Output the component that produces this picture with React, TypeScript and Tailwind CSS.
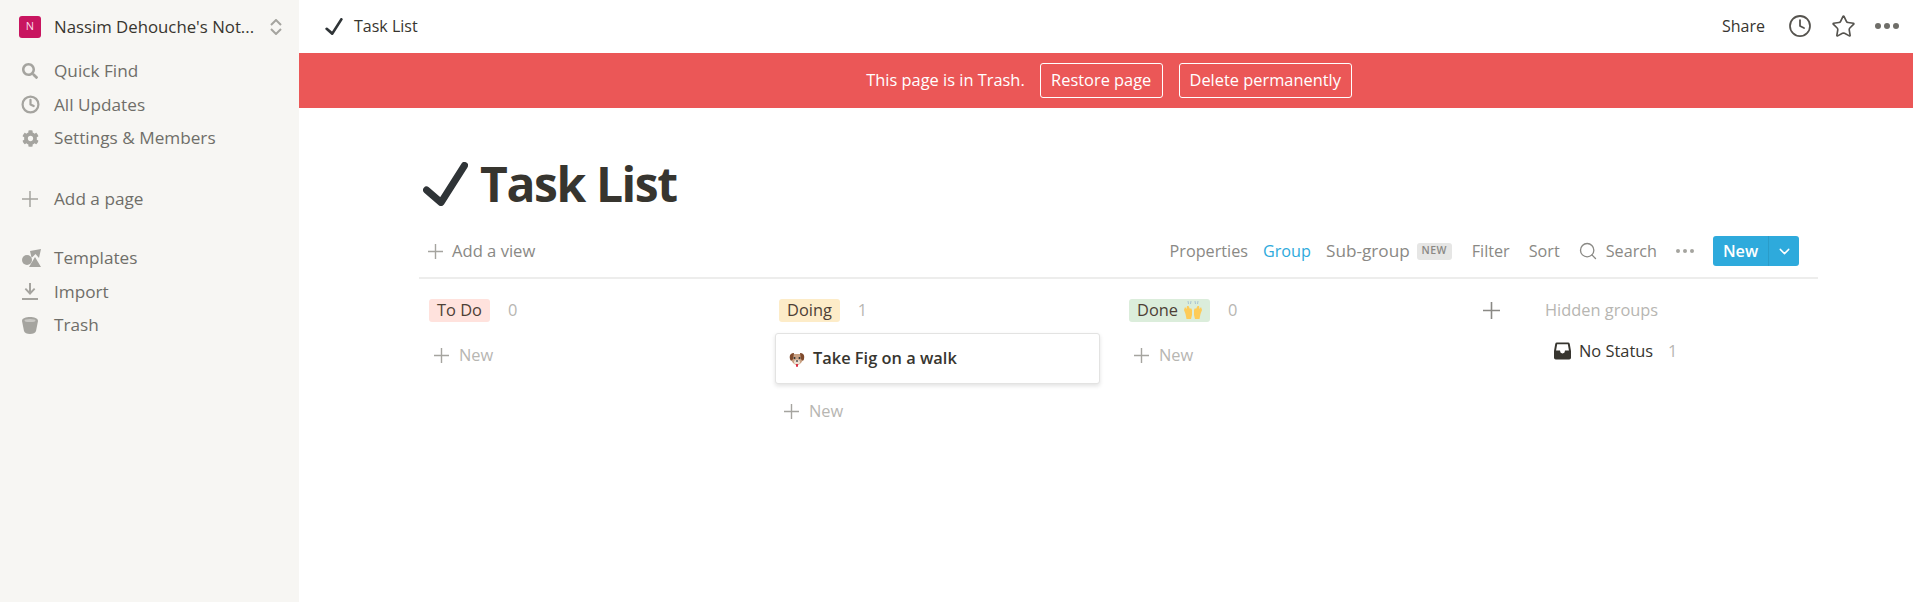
import { Search, Clock, ChevronDown, Star } from 'lucide-react';
import { FaCog, FaSearch } from 'react-icons/fa';

const FONT = "font-['Open_Sans','Noto_Sans',sans-serif]";

function PlusGlyph({ className }: { className: string }) {
  return (
    <svg viewBox="0 0 15 15" className={`fill-none stroke-current ${className}`}>
      <path d="M7.500 0v15M0 7.500h15" strokeWidth="1.400" />
    </svg>
  );
}

function CheckGlyph({ className }: { className: string }) {
  return (
    <svg viewBox="0 0 45 44" className={`shrink-0 fill-none stroke-[#2f3437] ${className}`}>
      <path d="M3.500 28L18 40.500L41.500 3.500" strokeWidth="7" strokeLinecap="round" strokeLinejoin="round" />
    </svg>
  );
}

function TemplatesIcon() {
  return (
    <svg viewBox="0 0 20 18" className="h-[18px] w-[20px] fill-[#a5a49f]">
      <circle cx="5" cy="11" r="5" />
      <path d="M8 2l11-2-2 9-3.500-4-3 3-1 .5z" />
      <path d="M13 8l6 10H7z" />
    </svg>
  );
}

function ImportIcon() {
  return (
    <svg viewBox="0 0 16 17" className="h-[17px] w-[16px] fill-[#a5a49f]">
      <path d="M7 0h2v8l3-3 1.300 1.300L8 12 2.700 6.300 4 5l3 3z" />
      <rect x="0" y="15" width="16" height="2" />
    </svg>
  );
}

function TrashIcon() {
  return (
    <svg viewBox="0 0 16 17" className="h-[17px] w-[16px] fill-[#a5a49f]">
      <path d="M0 4C0 1 4 0 8 0s8 1 8 4l-2 10c-.4 2-3 3-6 3s-5.600-1-6-3z" />
      <ellipse cx="8" cy="3.500" rx="5.500" ry="1.500" fill="#c9c8c4" />
    </svg>
  );
}

function DogEmoji() {
  return (
    <svg viewBox="0 0 16 16" className="h-[16px] w-[16px] shrink-0">
      <path d="M4 3h8l2 6-2 3-4 3-4-3-2-3z" fill="#c9a183" />
      <path d="M5 2C2 2 0 4 1 8c.5 2 2 2 3 0zM11 2c3 0 5 2 4 6-.5 2-2 2-3 0z" fill="#7f4a2c" />
      <ellipse cx="8" cy="11" rx="3" ry="2.500" fill="#eee0d2" />
      <circle cx="5.500" cy="7" r="1" fill="#292f33" />
      <circle cx="10.500" cy="7" r="1" fill="#292f33" />
      <ellipse cx="8" cy="10" rx="1.200" ry=".8" fill="#292f33" />
      <path d="M7 13h2v2a1 1 0 01-2 0z" fill="#dd2e44" />
    </svg>
  );
}

function HandsEmoji() {
  return (
    <svg viewBox="0 0 18 18" className="h-[18px] w-[18px] shrink-0">
      <path d="M0 9l1-3 1.500 2L3 5l1.500 0L6 8l1-1 1 2v5l-1 4H2.500L1.500 13zM18 9l-1-3-1.500 2L15 5l-1.500 0L12 8l-1-1-1 2v5l1 4h4.500l1-5z" fill="#fdcb58" />
      <path d="M4 0l.5 3M7 0L6.500 3M11 0l.5 3M14 0l-.5 3" stroke="#9ab7cf" strokeWidth=".8" />
    </svg>
  );
}

function InboxIcon() {
  return (
    <svg viewBox="0 0 14 14" className="h-[18px] w-[17px] fill-[#37352f]">
      <path d="M2.500 0h9A1.500 1.500 0 0113 1.200L14 7v5.500a1.500 1.500 0 01-1.500 1.500h-11A1.500 1.500 0 010 12.500V7l1-5.800A1.500 1.500 0 012.500 0zM2.600 1.500L1.700 6.500H5v.5a2 2 0 004 0v-.5h3.300l-.9-5z" />
    </svg>
  );
}

const NAV_TOP = [
  { label: 'Quick Find', icon: <FaSearch size={16} className="text-[#a5a49f]" /> },
  { label: 'All Updates', icon: <Clock size={19} strokeWidth={2.800} className="-ml-[1px] text-[#a5a49f]" /> },
  { label: 'Settings & Members', icon: <FaCog size={17} className="text-[#a5a49f]" /> },
];

const NAV_BOTTOM = [
  { label: 'Templates', icon: <TemplatesIcon /> },
  { label: 'Import', icon: <ImportIcon /> },
  { label: 'Trash', icon: <TrashIcon /> },
];

function NavRow({ label, icon }: { label: string; icon: React.ReactNode }) {
  return (
    <div className="flex h-[33.5px] items-center text-[17.2px] text-[#6f6e69]">
      <span className="flex w-[54px] shrink-0 pl-[22px]">{icon}</span>
      {label}
    </div>
  );
}

function Column({ name, count, tag, children }: { name: React.ReactNode; count: number; tag: string; children?: React.ReactNode }) {
  return (
    <div className="w-[350px] shrink-0">
      <div className="flex h-[26px] items-center pl-[10px]">
        <span className={`flex h-[23px] items-center gap-[6px] rounded-[3px] px-[8px] text-[16.4px] leading-none text-[#4d3f36] ${tag}`}>{name}</span>
        <span className="ml-[18px] text-[16.4px] text-[#b7b6b2]">{count}</span>
      </div>
      {children}
    </div>
  );
}

function NewRow({ className }: { className: string }) {
  return (
    <div className={`flex h-[26px] items-center pl-[15px] text-[16.4px] text-[#b7b6b2] ${className}`}>
      <PlusGlyph className="mr-[10px] h-[15px] w-[15px] text-[#a5a49f]" />
      New
    </div>
  );
}

export default function App() {
  return (
    <div className={`flex h-screen overflow-hidden bg-white ${FONT}`}>
      <aside className="w-[299px] shrink-0 bg-[#f7f6f3]">
        <div className="flex h-[53px] items-center pl-[19px] pr-[17px]">
          <span className="flex h-[22px] w-[22px] shrink-0 items-center justify-center rounded-[3px] bg-[#c8155f] text-[11px] text-[#fbdce9]">N</span>
          <span className="ml-[13px] flex-1 truncate text-[16.8px] font-medium text-[#37352f]">Nassim Dehouche's Not...</span>
          <svg viewBox="0 0 12 16" className="h-[16px] w-[12px] fill-none stroke-[#a5a49f] stroke-2">
            <path d="M1 6l5-5 5 5M1 10l5 5 5-5" />
          </svg>
        </div>
        <nav className="mt-[1.5px]">
          {NAV_TOP.map((item) => (
            <NavRow key={item.label} {...item} />
          ))}
        </nav>
        <div className="mt-[27px]">
          <NavRow label="Add a page" icon={<PlusGlyph className="h-[16px] w-[16px] text-[#a5a49f]" />} />
        </div>
        <nav className="mt-[26px]">
          {NAV_BOTTOM.map((item) => (
            <NavRow key={item.label} {...item} />
          ))}
        </nav>
      </aside>

      <main className="min-w-0 flex-1">
        <header className="flex h-[53px] items-center pl-[26px] pr-[14px] pb-[1px]">
          <CheckGlyph className="h-[17px] w-[18px]" />
          <span className="ml-[11px] text-[16px] text-[#37352f]">Task List</span>
          <span className="ml-auto text-[16px] text-[#37352f]">Share</span>
          <Clock size={24} strokeWidth={1.750} className="ml-[23px] text-[#55534e]" />
          <Star size={25} strokeWidth={1.600} className="ml-[19px] text-[#55534e]" />
          <span className="ml-[19px] flex gap-[3px]">
            <span className="h-[6px] w-[6px] rounded-full bg-[#6f6e69]" />
            <span className="h-[6px] w-[6px] rounded-full bg-[#6f6e69]" />
            <span className="h-[6px] w-[6px] rounded-full bg-[#6f6e69]" />
          </span>
        </header>

        <div className="flex h-[55px] items-center justify-center bg-[#eb5757] pl-[6px] text-[16.4px] text-white">
          This page is in Trash.
          <button className="ml-[15px] h-[35px] w-[123px] rounded-[3px] border border-white">Restore page</button>
          <button className="ml-[16px] h-[35px] w-[173px] rounded-[3px] border border-white">Delete permanently</button>
        </div>

        <div className="pl-[120px] pr-[95px]">
          <h1 className="mt-[51px] flex h-[49px] items-center text-[48px] font-bold tracking-[-1.400px] text-[#37352f]">
            <CheckGlyph className="ml-[4px] mr-[12px] h-[44px] w-[45px]" />
            Task List
          </h1>

          <div className="mt-[17px] flex h-[54px] items-center border-b-2 border-[#ededec] pl-[9px] pr-[19px] text-[16.2px] text-[#8a8985]">
            <PlusGlyph className="h-[15px] w-[15px] text-[#a5a49f]" />
            <span className="ml-[9px] text-[16.6px]">Add a view</span>
            <span className="ml-auto">Properties</span>
            <span className="ml-[15px] text-[#2eaadc]">Group</span>
            <span className="ml-[15px] text-[17.2px]">Sub-group</span>
            <span className="ml-[7px] flex h-[17px] w-[35px] items-center justify-center rounded-[3px] bg-[#e6e6e5] text-[10.5px] font-semibold tracking-wider text-[#8a8985]">NEW</span>
            <span className="ml-[20px]">Filter</span>
            <span className="ml-[19px]">Sort</span>
            <Search size={20} strokeWidth={1.600} className="ml-[18px]" />
            <span className="ml-[8px]">Search</span>
            <span className="ml-[19px] flex gap-[3px]">
              <span className="h-[4px] w-[4px] rounded-full bg-[#a5a49f]" />
              <span className="h-[4px] w-[4px] rounded-full bg-[#a5a49f]" />
              <span className="h-[4px] w-[4px] rounded-full bg-[#a5a49f]" />
            </span>
            <div className="ml-[19px] flex h-[30px] w-[86px] items-center rounded-[3px] bg-[#2eaadc] text-white">
              <span className="flex h-full w-[56px] items-center justify-center border-r border-[#2a9cc9] font-semibold">New</span>
              <span className="flex flex-1 justify-center">
                <ChevronDown size={17} strokeWidth={2} />
              </span>
            </div>
          </div>

          <div className="flex pt-[18px]">
            <Column name="To Do" count={0} tag="bg-[#ffe2dd]">
              <NewRow className="mt-[19px]" />
            </Column>
            <Column name="Doing" count={1} tag="bg-[#fdecc8]">
              <div className="ml-[6px] mr-[19px] mt-[10px] flex h-[51px] items-center gap-[8px] rounded-[3px] border border-[#e3e3e2] bg-white pl-[13px] shadow-[0_2px_4px_rgba(15,15,15,0.12)]">
                <DogEmoji />
                <span className="text-[16.4px] font-semibold text-[#37352f]">Take Fig on a walk</span>
              </div>
              <NewRow className="mt-[14px]" />
            </Column>
            <Column name={<>Done <HandsEmoji /></>} count={0} tag="bg-[#dbeddb]">
              <NewRow className="mt-[19px]" />
            </Column>
            <div className="w-[76px] shrink-0 pl-[14px]">
              <div className="flex h-[26px] items-center">
                <PlusGlyph className="h-[17px] w-[17px] text-[#8a8985]" />
              </div>
            </div>
            <div className="flex-1">
              <div className="flex h-[26px] items-center text-[16.4px] text-[#b7b6b2]">Hidden groups</div>
              <div className="mt-[15px] flex h-[26px] items-center pl-[9px] text-[16.4px] text-[#37352f]">
                <InboxIcon />
                <span className="ml-[8px]">No Status</span>
                <span className="ml-[15px] text-[#b7b6b2]">1</span>
              </div>
            </div>
          </div>
        </div>
      </main>
    </div>
  );
}
